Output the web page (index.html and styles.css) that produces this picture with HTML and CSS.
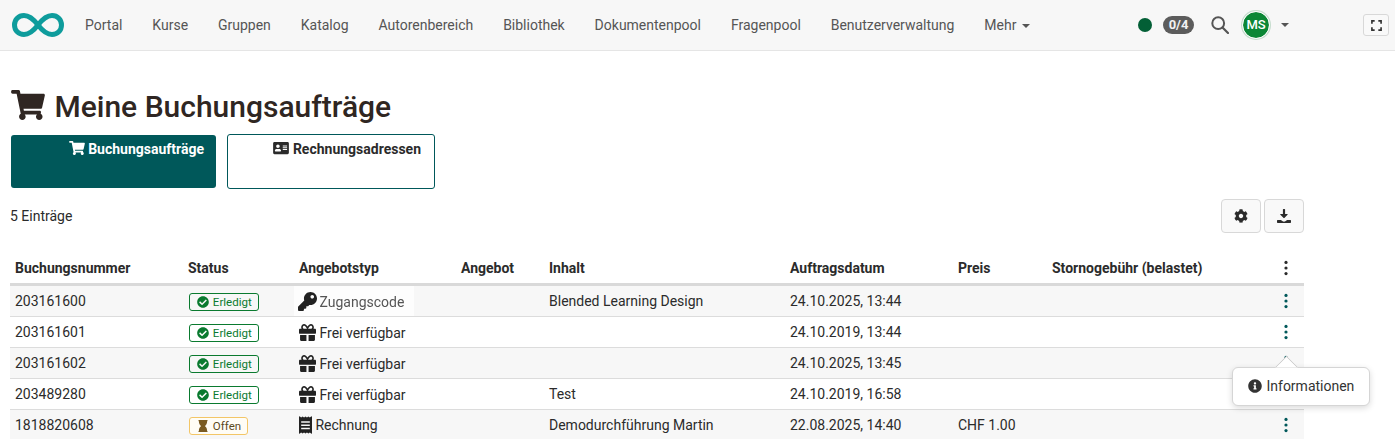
FILE: index.html
```html
<!DOCTYPE html>
<html lang="de">
<head>
    <meta charset="UTF-8">
    <meta name="viewport" content="width=device-width, initial-scale=1.0">
    <title>Meine Buchungsaufträge</title>
    <link rel="stylesheet" href="styles.css">
</head>
<body>

    <!-- Icon set -->
    <svg class="icon-defs" aria-hidden="true">
        <symbol id="i-cart" viewBox="0 0 576 512"><path d="M528.12 301.319l47.273-208C578.806 78.301 567.391 64 551.99 64H159.208l-9.166-44.81C147.758 8.021 137.93 0 126.529 0H24C10.745 0 0 10.745 0 24v16c0 13.255 10.745 24 24 24h69.883l70.248 343.435C147.325 417.1 136 435.222 136 456c0 30.928 25.072 56 56 56s56-25.072 56-56c0-15.674-6.447-29.835-16.824-40h209.647C430.447 426.165 424 440.326 424 456c0 30.928 25.072 56 56 56s56-25.072 56-56c0-22.172-12.888-41.332-31.579-50.405l5.517-24.276c3.413-15.018-8.002-29.319-23.403-29.319H218.117l-6.545-32h293.145c11.206 0 20.92-7.754 23.403-18.681z"/></symbol>
        <symbol id="i-card" viewBox="0 0 576 512"><path d="M528 32H48C21.5 32 0 53.5 0 80v352c0 26.500 21.500 48 48 48h480c26.500 0 48-21.500 48-48V80c0-26.500-21.500-48-48-48zM176 128c35.300 0 64 28.700 64 64s-28.700 64-64 64-64-28.700-64-64 28.700-64 64-64zm112 237c0 10.500-10 19-22.400 19H86.400C74 384 64 375.500 64 365v-19c0-31.500 30-57 67.200-57h5c12.300 5.100 25.700 8 39.800 8s27.600-2.900 39.800-8h5c37.100 0 67.200 25.500 67.200 57v19zm224-45c0 4.400-3.600 8-8 8H360c-4.400 0-8-3.600-8-8v-16c0-4.400 3.600-8 8-8h144c4.400 0 8 3.600 8 8v16zm0-64c0 4.400-3.600 8-8 8H360c-4.400 0-8-3.600-8-8v-16c0-4.400 3.600-8 8-8h144c4.400 0 8 3.600 8 8v16zm0-64c0 4.400-3.600 8-8 8H360c-4.400 0-8-3.600-8-8v-16c0-4.400 3.600-8 8-8h144c4.400 0 8 3.600 8 8v16z"/></symbol>
        <symbol id="i-check" viewBox="0 0 512 512"><path d="M504 256c0 136.967-111.033 248-248 248S8 392.967 8 256 119.033 8 256 8s248 111.033 248 248zM227.314 387.314l184-184c6.248-6.248 6.248-16.379 0-22.627l-22.627-22.627c-6.248-6.249-16.379-6.249-22.628 0L216 308.118l-70.059-70.059c-6.248-6.248-16.379-6.248-22.628 0l-22.627 22.627c-6.248 6.248-6.248 16.379 0 22.627l104 104c6.249 6.249 16.379 6.249 22.628.001z"/></symbol>
        <symbol id="i-gift" viewBox="0 32 512 448" preserveAspectRatio="none"><path d="M32 448c0 17.700 14.300 32 32 32h160V320H32v128zm256 32h160c17.700 0 32-14.300 32-32V320H288v160zm192-320h-42.100c6.200-12.100 10.100-25.500 10.100-40 0-48.500-39.500-88-88-88-41.600 0-68.500 21.300-103 68.300-34.500-47-61.400-68.300-103-68.300-48.500 0-88 39.500-88 88 0 14.500 3.800 27.900 10.100 40H32c-17.700 0-32 14.300-32 32v80c0 8.800 7.200 16 16 16h480c8.800 0 16-7.200 16-16v-80c0-17.700-14.300-32-32-32zm-326.100 0c-22.100 0-40-17.900-40-40s17.900-40 40-40c19.900 0 34.600 3.300 86.100 80h-86.100zm206.100 0h-86.100c51.400-76.500 65.700-80 86.100-80 22.100 0 40 17.900 40 40s-17.900 40-40 40z"/></symbol>
        <symbol id="i-key" viewBox="0 0 512 512"><path d="M512 176.001C512 273.203 433.202 352 336 352c-11.220 0-22.190-1.062-32.827-3.069l-24.012 27.014A23.999 23.999 0 0 1 261.223 384H224v40c0 13.255-10.745 24-24 24h-40v40c0 13.255-10.745 24-24 24H24c-13.255 0-24-10.745-24-24v-78.059c0-6.365 2.529-12.470 7.029-16.971l161.802-161.802C163.108 213.814 160 195.271 160 176 160 78.798 238.797.001 335.999 0 433.488-.001 512 78.511 512 176.001zM336 128c0 26.510 21.490 48 48 48s48-21.490 48-48-21.490-48-48-48-48 21.490-48 48z"/></symbol>
        <symbol id="i-receipt" viewBox="0 0 384 512"><path d="M358 2l-38 30-42-30-43 30-43-30-43 30-43-30-42 30L26 2C14-6 0 2 0 16v480c0 14 14 22 26 14l38-30 42 30 43-30 43 30 43-30 43 30 42-30 38 30c12 8 26 0 26-14V16c0-14-14-22-26-14zM320 372c0 7-5 12-12 12H76c-7 0-12-5-12-12v-24c0-7 5-12 12-12h232c7 0 12 5 12 12v24zm0-96c0 7-5 12-12 12H76c-7 0-12-5-12-12v-24c0-7 5-12 12-12h232c7 0 12 5 12 12v24zm0-96c0 7-5 12-12 12H76c-7 0-12-5-12-12v-24c0-7 5-12 12-12h232c7 0 12 5 12 12v24z"/></symbol>
        <symbol id="i-hourglass" viewBox="0 0 384 512"><path d="M368 48h4c6.600 0 12-5.400 12-12V12c0-6.600-5.400-12-12-12H12C5.400 0 0 5.400 0 12v24c0 6.600 5.400 12 12 12h4c0 80.600 32.200 165.200 97.200 208C48 298.800 16 383.600 16 464h-4c-6.600 0-12 5.400-12 12v24c0 6.600 5.400 12 12 12h360c6.600 0 12-5.400 12-12v-24c0-6.600-5.400-12-12-12h-4c0-80.600-32.200-165.200-97.200-208C336 213.200 368 128.400 368 48z"/></symbol>
        <symbol id="i-info" viewBox="0 0 512 512"><path d="M256 8C119.043 8 8 119.083 8 256c0 136.997 111.043 248 248 248s248-111.003 248-248C504 119.083 392.957 8 256 8zm0 110c23.196 0 42 18.804 42 42s-18.804 42-42 42-42-18.804-42-42 18.804-42 42-42zm56 254c0 6.627-5.373 12-12 12h-88c-6.627 0-12-5.373-12-12v-24c0-6.627 5.373-12 12-12h12v-64h-12c-6.627 0-12-5.373-12-12v-24c0-6.627 5.373-12 12-12h64c6.627 0 12 5.373 12 12v100h12c6.627 0 12 5.373 12 12v24z"/></symbol>
        <symbol id="i-cog" viewBox="0 0 512 512"><path d="M487.400 315.700l-42.600-24.600c4.300-23.200 4.300-47 0-70.200l42.600-24.600c4.900-2.800 7.100-8.600 5.500-14-11.100-35.600-30-67.800-54.700-94.600-3.800-4.100-10-5.100-14.800-2.300L380.800 110c-17.900-15.400-38.500-27.300-60.800-35.100V25.800c0-5.600-3.900-10.500-9.400-11.700-36.700-8.200-74.300-7.800-109.200 0-5.500 1.200-9.400 6.100-9.400 11.700V75c-22.200 7.900-42.800 19.800-60.800 35.100L88.700 85.500c-4.900-2.800-11-1.900-14.800 2.300-24.700 26.700-43.600 58.900-54.700 94.600-1.700 5.400.6 11.200 5.500 14L67.300 221c-4.300 23.200-4.300 47 0 70.200l-42.600 24.600c-4.900 2.800-7.100 8.600-5.500 14 11.100 35.600 30 67.800 54.700 94.600 3.800 4.100 10 5.100 14.800 2.300l42.600-24.600c17.900 15.400 38.500 27.300 60.800 35.100v49.200c0 5.600 3.900 10.500 9.400 11.700 36.700 8.200 74.300 7.800 109.200 0 5.500-1.200 9.400-6.100 9.400-11.700v-49.200c22.200-7.900 42.800-19.800 60.800-35.100l42.600 24.600c4.900 2.800 11 1.900 14.800-2.300 24.700-26.700 43.600-58.900 54.700-94.600 1.500-5.500-.7-11.300-5.600-14.100zM256 336c-44.100 0-80-35.900-80-80s35.900-80 80-80 80 35.900 80 80-35.900 80-80 80z"/></symbol>
        <symbol id="i-download" viewBox="0 0 512 512"><path d="M216 20c0-11 9-20 20-20h40c11 0 20 9 20 20v160h76c16 0 24 19 13 30L269 330c-7 7-19 7-26 0L123 210c-11-11-3-30 13-30h80zM24 400h120l62 48c30 22 70 22 100 0l62-48h120c13 0 24 11 24 24v64c0 13-11 24-24 24H24c-13 0-24-11-24-24v-64c0-13 11-24 24-24z"/></symbol>
        <symbol id="i-kebab" viewBox="0 0 8 20"><circle cx="4" cy="3" r="2"/><circle cx="4" cy="10" r="2"/><circle cx="4" cy="17" r="2"/></symbol>
    </svg>

    <!-- Top navigation -->
    <header class="topnav">
        <a class="logo" href="#" aria-label="Startseite">
            <svg viewBox="0 0 52 26" width="52" height="26"><path d="M26 13C21 6.500 17 3.500 12 3.500 6.500 3.500 2.500 7.500 2.500 13s4 9.500 9.500 9.500c5 0 9-3 14-9.500s9-9.500 14-9.500c5.500 0 9.500 4 9.500 9.500s-4 9.500-9.500 9.500c-5 0-9-3-14-9.500z" fill="none" stroke="#0e9c9c" stroke-width="5"/></svg>
        </a>
        <nav class="nav-links">
            <a href="#">Portal</a>
            <a href="#">Kurse</a>
            <a href="#">Gruppen</a>
            <a href="#">Katalog</a>
            <a href="#">Autorenbereich</a>
            <a href="#">Bibliothek</a>
            <a href="#">Dokumentenpool</a>
            <a href="#">Fragenpool</a>
            <a href="#">Benutzerverwaltung</a>
            <a href="#">Mehr <span class="caret"></span></a>
        </nav>
        <div class="nav-tools">
            <span class="status-dot"></span>
            <span class="count-pill">0/4</span>
            <svg class="search-icon" viewBox="0 0 18 18" width="18" height="18"><circle cx="7.200" cy="7.200" r="5.900" fill="none" stroke="#555" stroke-width="2"/><path d="M11.500 11.500L17 17" stroke="#555" stroke-width="2.200" stroke-linecap="round"/></svg>
            <span class="avatar">MS</span>
            <span class="caret user-caret"></span>
        </div>
        <button class="fullscreen" aria-label="Vollbild">
            <svg viewBox="0 0 12 12" width="11" height="11"><path d="M1 4V1h3M8 1h3v3M11 8v3H8M4 11H1V8" fill="none" stroke="#333" stroke-width="1.800"/></svg>
        </button>
    </header>

    <main class="content">
        <h1 class="page-title"><svg class="title-icon"><use href="#i-cart"/></svg> Meine Buchungsaufträge</h1>

        <div class="tabs">
            <a class="tab tab-active" href="#"><svg class="ico-tab"><use href="#i-cart"/></svg> Buchungsaufträge</a>
            <a class="tab tab-plain" href="#"><svg class="ico-tab"><use href="#i-card"/></svg> Rechnungsadressen</a>
        </div>

        <div class="table-tools">
            <span class="entry-count">5 Einträge</span>
            <div class="tool-buttons">
                <button class="tool-btn" aria-label="Einstellungen"><svg class="ico"><use href="#i-cog"/></svg></button>
                <button class="tool-btn" aria-label="Herunterladen"><svg class="ico"><use href="#i-download"/></svg></button>
            </div>
        </div>

        <table class="orders">
            <colgroup>
                <col class="c-nr"><col class="c-status"><col class="c-type"><col class="c-offer"><col class="c-content"><col class="c-date"><col class="c-price"><col class="c-fee"><col class="c-menu">
            </colgroup>
            <thead>
                <tr>
                    <th>Buchungsnummer</th>
                    <th>Status</th>
                    <th>Angebotstyp</th>
                    <th>Angebot</th>
                    <th>Inhalt</th>
                    <th>Auftragsdatum</th>
                    <th>Preis</th>
                    <th>Stornogebühr (belastet)</th>
                    <th><svg class="kebab"><use href="#i-kebab"/></svg></th>
                </tr>
            </thead>
            <tbody>
                <tr>
                    <td>203161600</td>
                    <td><span class="badge badge-done"><svg class="ico-sm"><use href="#i-check"/></svg> Erledigt</span></td>
                    <td class="type-patched"><svg class="ico-type ico-key"><use href="#i-key"/></svg> <span class="type-soft">Zugangscode</span></td>
                    <td></td>
                    <td>Blended Learning Design</td>
                    <td>24.10.2025, 13:44</td>
                    <td></td>
                    <td></td>
                    <td><svg class="kebab kebab-link"><use href="#i-kebab"/></svg></td>
                </tr>
                <tr>
                    <td>203161601</td>
                    <td><span class="badge badge-done"><svg class="ico-sm"><use href="#i-check"/></svg> Erledigt</span></td>
                    <td><svg class="ico-type"><use href="#i-gift"/></svg> Frei verfügbar</td>
                    <td></td>
                    <td></td>
                    <td>24.10.2019, 13:44</td>
                    <td></td>
                    <td></td>
                    <td><svg class="kebab kebab-link"><use href="#i-kebab"/></svg></td>
                </tr>
                <tr>
                    <td>203161602</td>
                    <td><span class="badge badge-done"><svg class="ico-sm"><use href="#i-check"/></svg> Erledigt</span></td>
                    <td><svg class="ico-type"><use href="#i-gift"/></svg> Frei verfügbar</td>
                    <td></td>
                    <td></td>
                    <td>24.10.2025, 13:45</td>
                    <td></td>
                    <td></td>
                    <td><svg class="kebab kebab-link"><use href="#i-kebab"/></svg></td>
                </tr>
                <tr>
                    <td>203489280</td>
                    <td><span class="badge badge-done"><svg class="ico-sm"><use href="#i-check"/></svg> Erledigt</span></td>
                    <td><svg class="ico-type"><use href="#i-gift"/></svg> Frei verfügbar</td>
                    <td></td>
                    <td>Test</td>
                    <td>24.10.2019, 16:58</td>
                    <td></td>
                    <td></td>
                    <td><svg class="kebab kebab-link"><use href="#i-kebab"/></svg></td>
                </tr>
                <tr>
                    <td>1818820608</td>
                    <td><span class="badge badge-open"><svg class="ico-sm ico-glass"><use href="#i-hourglass"/></svg> Offen</span></td>
                    <td><svg class="ico-type ico-receipt"><use href="#i-receipt"/></svg> Rechnung</td>
                    <td></td>
                    <td>Demodurchführung Martin</td>
                    <td>22.08.2025, 14:40</td>
                    <td>CHF 1.00</td>
                    <td></td>
                    <td><svg class="kebab kebab-link"><use href="#i-kebab"/></svg></td>
                </tr>
            </tbody>
        </table>
    </main>

    <!-- Popover over the row menu -->
    <div class="popover">
        <svg class="ico popover-icon"><use href="#i-info"/></svg> Informationen
    </div>

</body>
</html>
```

FILE: styles.css
```css
html, body {
    height: 100%;
}

body {
    margin: 0;
    overflow: hidden;
    position: relative;
    font-family: 'Roboto', sans-serif;
    font-size: 14px;
    color: #2b2b2b;
    background-color: #fff;
}

a {
    color: inherit;
    text-decoration: none;
}

.icon-defs {
    display: none;
}

.ico {
    width: 14px;
    height: 14px;
    fill: currentColor;
    vertical-align: -2px;
}

.ico-tab {
    width: 16px;
    height: 14px;
    fill: currentColor;
    vertical-align: -1px;
}

/* Top navigation */
.topnav {
    display: flex;
    align-items: center;
    height: 50px;
    padding: 0 6px 0 12px;
    background-color: #f7f7f7;
    border-bottom: 1px solid #e5e5e5;
}

.logo {
    display: flex;
    width: 52px;
    margin-right: 21px;
}

.nav-links {
    display: flex;
    gap: 29.9px;
    color: #555;
}

.caret {
    display: inline-block;
    margin-left: 2px;
    border-top: 4px solid #555;
    border-left: 4px solid transparent;
    border-right: 4px solid transparent;
    vertical-align: 2px;
}

.nav-tools {
    display: flex;
    align-items: center;
    margin-left: auto;
}

.status-dot {
    width: 14px;
    height: 14px;
    border-radius: 50%;
    background-color: #035f36;
}

.count-pill {
    width: 31px;
    margin-left: 11px;
    padding: 2px 0;
    font-size: 13px;
    font-weight: 700;
    line-height: 14px;
    text-align: center;
    color: #f2f2f2;
    background-color: #5c5c5c;
    border-radius: 9px;
}

.search-icon {
    margin-left: 17px;
}

.avatar {
    width: 26px;
    height: 26px;
    margin-left: 13px;
    font-size: 13px;
    font-weight: 500;
    line-height: 26px;
    text-align: center;
    color: #fff;
    background-color: #0b8735;
    background-clip: padding-box;
    border: 1px solid #fff;
    border-radius: 50%;
    box-shadow: 0 0 0 1px #c5dccd;
}

.user-caret {
    margin: 0 0 0 11px;
}

.fullscreen {
    display: flex;
    align-items: center;
    justify-content: center;
    width: 26px;
    height: 22px;
    margin-left: 74px;
    padding: 0;
    background-color: #f9f9f9;
    border: 1px solid #d8d8d8;
    border-radius: 3px;
}

/* Page content */
.content {
    padding: 38px 91px 0 10px;
}

.page-title {
    margin: 0;
    font-size: 30px;
    font-weight: 500;
    line-height: 36px;
    color: #2f2622;
}

.title-icon {
    width: 34px;
    height: 30px;
    margin: 0 2px 0 1px;
    fill: currentColor;
    vertical-align: -3px;
}

.tabs {
    display: flex;
    gap: 11px;
    margin-top: 9px;
    align-items: center;
}

.tab {
    box-sizing: border-box;
    padding: 6px 13px;
    font-weight: 700;
    line-height: 17px;
    text-align: right;
    border-radius: 3px;
}

.tab-active {
    width: 205px;
    height: 53px;
    margin-left: 1px;
    padding-right: 12px;
    color: #fff;
    background-color: #00585a;
}

.tab-plain {
    width: 208px;
    height: 55px;
    color: #2b2b2b;
    background-color: #fff;
    border: 1px solid #00585a;
}

.table-tools {
    display: flex;
    align-items: center;
    justify-content: space-between;
    margin-top: 10px;
}

.entry-count {
    font-size: 14px;
}

.tool-buttons {
    display: flex;
    gap: 3px;
}

.tool-btn {
    width: 40px;
    height: 34px;
    padding: 0;
    color: #2b2b2b;
    background-color: #f9f9f9;
    border: 1px solid #d8d8d8;
    border-radius: 4px;
}

/* Orders table */
.orders {
    width: 1294px;
    margin-top: 20px;
    table-layout: fixed;
    border-collapse: collapse;
}

.c-nr { width: 173px; }
.c-status { width: 111px; }
.c-type { width: 162px; }
.c-offer { width: 88px; }
.c-content { width: 241px; }
.c-date { width: 168px; }
.c-price { width: 94px; }
.c-fee { width: 228px; }
.c-menu { width: 29px; }

.orders th {
    height: 30px;
    padding: 0 5px;
    font-weight: 700;
    text-align: left;
    border-bottom: 3px solid #d9d9d9;
}

.orders td {
    height: 30px;
    padding: 0 5px;
    white-space: nowrap;
    border-bottom: 1px solid #dcdcdc;
}

.orders tbody tr:nth-child(odd) {
    background-color: #f7f7f7;
}

.type-patched {
    background: linear-gradient(#fdfdfd, #fdfdfd) no-repeat 0 0 / 120px 100%;
}

.type-soft {
    margin-left: -1px;
    color: #555;
    filter: blur(0.3px);
}

.badge {
    display: inline-block;
    box-sizing: border-box;
    height: 18px;
    margin: 2px 0 0 1px;
    padding: 0 7px;
    font-size: 11.5px;
    line-height: 16px;
    border: 1px solid;
    border-radius: 3px;
    vertical-align: middle;
}

.badge-done {
    width: 70px;
    color: #0a7a2f;
    border-color: #0a7a2f;
}

.badge-open {
    width: 59px;
    color: #5c4a1e;
    background-color: #fffdf6;
    border-color: #f3c667;
}

.ico-sm {
    width: 12px;
    height: 12px;
    margin-right: 1px;
    fill: currentColor;
    vertical-align: -2px;
}

.ico-glass {
    fill: #7a5b22;
}

.ico-type {
    width: 17px;
    height: 17px;
    fill: #222;
    vertical-align: -3px;
}

.ico-key {
    width: 19px;
    height: 19px;
    margin-left: -1px;
    vertical-align: -4px;
}

.ico-receipt {
    width: 13px;
    height: 18px;
    vertical-align: -4px;
}

.kebab {
    display: block;
    width: 8px;
    height: 16px;
    margin-left: 2px;
    fill: #2b2b2b;
}

.kebab-link {
    fill: #00585a;
}

/* Popover */
.popover {
    position: absolute;
    left: 1232px;
    top: 367px;
    box-sizing: border-box;
    width: 138px;
    height: 39px;
    padding-left: 15px;
    line-height: 37px;
    color: #333;
    background-color: #fff;
    border: 1px solid #d5d5d5;
    border-radius: 6px;
    box-shadow: 0 2px 6px rgba(0, 0, 0, 0.15);
}

.popover-icon {
    margin-right: 1px;
}

.popover::before {
    content: "";
    position: absolute;
    left: 45px;
    top: -9px;
    width: 16px;
    height: 16px;
    background-color: #fff;
    border-top: 1px solid #c8c8c8;
    border-left: 1px solid #c8c8c8;
    transform: rotate(45deg);
    clip-path: polygon(0 0, 100% 0, 0 100%);
}
```
